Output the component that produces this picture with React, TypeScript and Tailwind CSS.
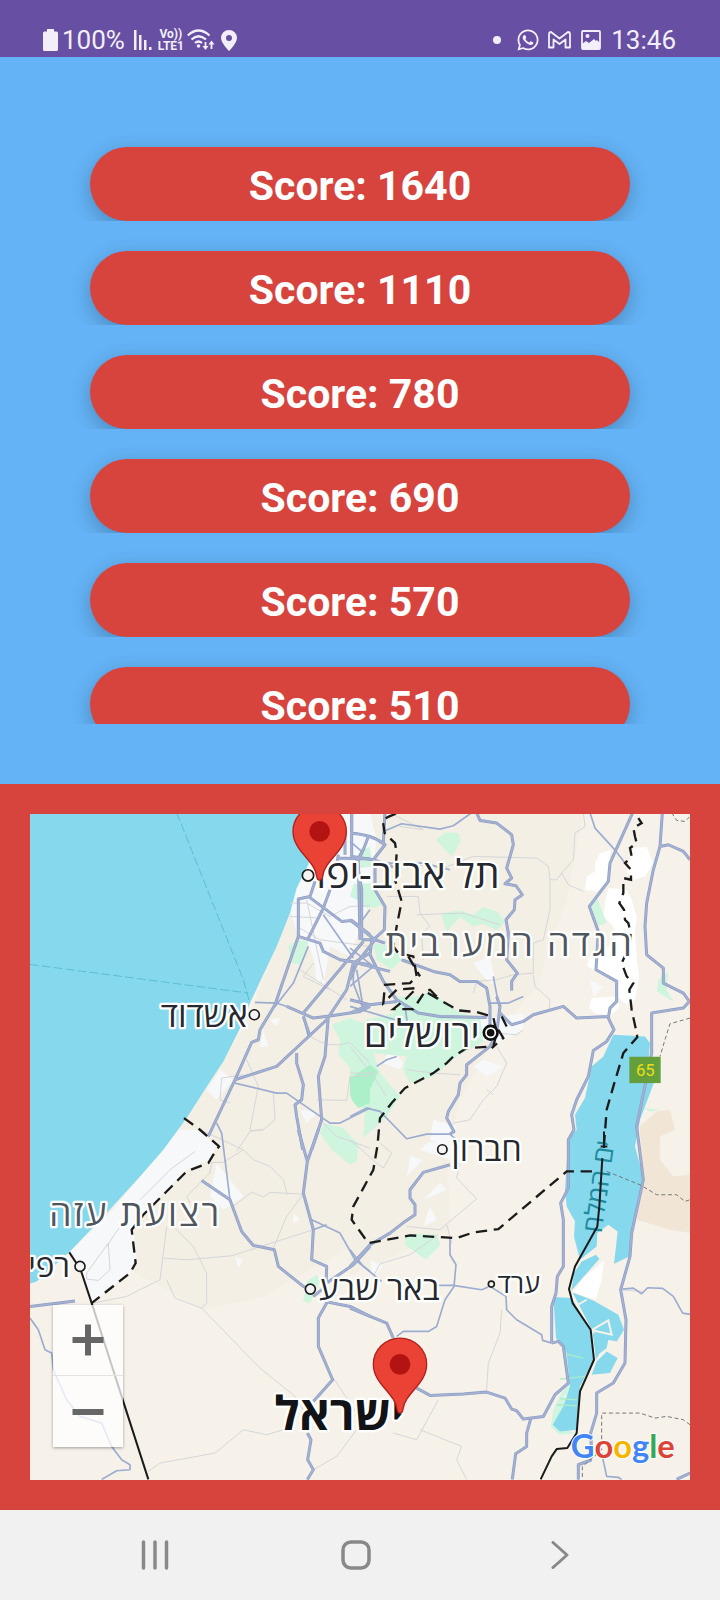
import React from "react";
import { FaWhatsapp } from "react-icons/fa";

type Tile = [number, number];
type Shape = { at: Tile; d: string };

// Each map tile is drawn in its own coordinates and placed by its offset.
const NW: Tile = [0, 0];
const NE: Tile = [960, 0];
const SW: Tile = [0, 990];
const SE: Tile = [960, 990];

const scores = [1640, 1110, 780, 690, 570, 510];

const shade: Shape[] = [
  { at: NE, d: "M0 39H700L650 300 560 560 440 700 330 900 300 1040 0 1040Z" },
  { at: NW, d: "M840 39H1000V1050H400L640 690 780 340Z" },
  { at: SW, d: "M440 0H1000V330L700 500 520 540 300 420 185 520 120 365Z" },
  { at: SE, d: "M0 0H290L300 300 40 420 0 440Z" },
];

const cities: Shape[] = [
  { at: NW, d: "M850 39H1020V180L1000 250 1010 330 960 470 900 440 880 560 830 420 800 400 780 330Z" },
  { at: NW, d: "M570 810L610 840 560 900 530 870ZM700 690L715 740 690 742ZM850 440L885 530 860 550ZM720 660L750 655 740 680ZM810 930L860 940 830 970Z" },
  { at: NE, d: "M0 39H60L80 120 60 260 20 340 0 330ZM370 490L420 470 440 560 400 530ZM390 660L520 640 520 690 440 730 390 720ZM400 780L460 800 410 830 370 800ZM120 740L160 790 150 810 100 790ZM720 540L760 560 730 590ZM250 960L320 980 300 1040 240 1020Z" },
  { at: SW, d: "M440 0H500L560 45 540 90 470 120 350 240 310 290 320 390 300 430 185 520 150 420 120 365 230 260 330 140ZM560 100L640 200 580 240 540 200ZM615 380L640 390 625 415ZM790 250L810 270 790 280Z" },
  { at: SE, d: "M210 60L300 90 320 30 230 40ZM180 80L220 90 170 140ZM270 160L290 180 220 210ZM240 230L260 270 220 290ZM60 390L100 410 70 440Z" },
];

const white: Shape[] = [
  { at: NE, d: "M750 160L782 150 775 245 740 275 705 270 710 230 735 215 735 190Z" },
  { at: NE, d: "M850 145L890 142 910 190 885 230 850 240 830 215 840 175Z" },
  { at: NE, d: "M775 265L830 270 845 300 860 350 855 400 860 480 868 530 855 600 830 615 800 590 805 550 745 515 712 500 715 475 755 450 800 430 790 380 760 350 765 310Z" },
  { at: NE, d: "M725 595L795 590 810 620 780 650 735 640 718 625Z" },
  { at: SE, d: "M762 392L755 450 737 510 668 488 700 445Z" },
];

const green: Shape[] = [
  { at: NE, d: "M258 120L285 98 325 100 332 125 305 170 280 145Z" },
  { at: NE, d: "M272 340L330 332 370 345 400 322 440 335 465 365 440 392 400 372 370 380 330 352 290 395Z" },
  { at: NE, d: "M30 145L60 150 70 200 30 205ZM10 255L60 250 100 315 70 325 0 290ZM70 430L130 440 155 480 125 510 80 480ZM300 430L320 430 305 460Z" },
  { at: NE, d: "M140 590L200 590 240 575 330 640 390 655 400 725 320 770 250 830 180 850 160 810 170 770 70 760 90 820 150 890 110 950 40 1015 45 930 0 890 0 700 50 660 130 640Z" },
  { at: NE, d: "M738 285L770 370 745 378 722 320ZM925 540L955 515 950 570 970 605 920 575ZM880 925L930 930 900 935Z" },
  { at: NW, d: "M775 440L800 420 835 425 815 495 785 490ZM905 675L960 655 1020 680 1020 820 970 815 925 765 930 720ZM985 160L1020 140V200L990 190ZM970 250L1020 270V325L990 320Z" },
  { at: NW, d: "M880 970L940 985 985 1040 980 1080 960 1095 905 1050 870 1000Z" },
  { at: SE, d: "M165 322L180 312 260 314 272 345 228 390 165 345ZM0 20L25 40 20 95 0 105Z" },
  { at: SE, d: "M640 670L665 690 670 745 705 740 690 770 640 800 690 830 630 850 615 890 680 910 630 915 602 890 610 840 635 790 655 760Z" },
  { at: SW, d: "M830 455L860 435 870 455 840 520 820 515Z" },
];

const deepGreen: Shape[] = [
  { at: NE, d: "M0 835L60 795 85 815 50 890 30 925 0 885Z" },
  { at: NW, d: "M960 860L1020 815V910L985 925 965 900Z" },
];

const sand: Shape[] = [
  { at: SE, d: "M868 -10L920 -55 960 -60 975 0 930 20 930 90 970 140 1020 135V310L960 300 860 270 880 150Z" },
];

const lake: Shape[] = [
  { at: NE, d: "M790 705L885 710 900 730 895 790 930 800 870 960 855 1040 882 1140 850 1280 838 1370 792 1392 803 1295 775 1275 742 1300 740 1340 690 1380 672 1310 675 1265 650 1220 645 1170 655 1020 680 990 675 945 705 895 725 800 760 770Z" },
  { at: SE, d: "M738 375L748 388 664 482 672 430 695 395Z" },
  { at: SE, d: "M610 502L665 505 720 600 730 690 690 770 680 900 630 905 608 885 640 830 660 770 650 670 618 625Z" },
  { at: SE, d: "M668 488L730 512 805 555 822 600 800 635 750 625 725 600ZM728 608L775 630 770 655 748 672 738 690ZM770 665L803 685 780 730 725 735 740 695Z" },
];

const minor: Shape[] = [
  { at: NW, d: "M780 310L830 310 900 350 960 320 1020 318M780 350L870 355M800 380L870 420 1020 440M830 300L880 540M810 510L950 600M850 490L820 530 900 570M840 710Q900 750 960 728L1020 790M570 900L575 835 640 825M570 900L600 910M650 780L685 860 660 990M730 880L735 960 700 990 660 993M860 900L950 902 960 830 1020 828M880 970L920 1010 1020 1045" },
  { at: NE, d: "M150 190L280 205 370 170 560 175 595 200 600 240 600 330 580 420 550 430 550 520 490 525 440 540M150 80L220 90 140 50M110 290L205 290 210 340 240 380 215 400 220 480M200 345L340 340 450 375M700 39L705 80 675 100 670 180 635 220 655 255 700 275M600 240L620 240 635 220M370 580L380 545 440 540M550 525L555 560 600 600 598 630M520 690L500 705 440 700M440 740L470 790 440 860 400 900 360 960 310 970M170 810L250 820 330 825M0 820H80M410 870L430 885M0 740L70 830 110 890" },
  { at: SW, d: "M510 0L640 60 670 90 720 110 760 150 772 195M620 65L660 5 700 0M640 60L580 98 545 98 540 130 470 200 480 220M610 230L665 187 700 202 720 188 820 193 770 260 730 355M400 385L470 390 605 378 740 335 850 300M410 290L390 450 290 500 190 520M410 450L435 505 515 535 530 520 530 430 490 350 430 290M515 535L690 715 795 800 820 840M355 1025L390 1000 555 970 640 900 710 915 760 900M850 1020L920 980 980 900M910 745L980 850" },
  { at: SE, d: "M0 30L80 100 100 115 125 70 90 40M380 207L320 145 330 100M380 207L270 300 170 290M290 285L305 340M265 315L180 375 90 402 70 440M455 540L450 610 415 700 410 780M265 810L200 930 130 910M210 900L260 920 335 950 320 990 350 1049M810 480L880 485" },
  { at: SW, d: "M170 430L235 340 240 420 205 452 170 448ZM230 350L270 290M330 210L420 120 495 65" },
];

const medium: Shape[] = [
  { at: NW, d: "M880 345L970 475M675 608L740 610 770 620M835 440L790 550 735 620M970 490V550L1000 630M820 650L835 710M615 850L740 880 770 880 900 970 930 970 1020 925" },
  { at: NE, d: "M100 95L155 72 270 88 310 78 365 39M0 125L35 155 20 180M90 190H220L300 210M30 370L60 330M0 620L135 660M0 445L70 500 0 560M20 510L40 625M420 610H475L520 590M430 530L445 610M0 950L50 925 90 935 170 1017 230 1003 300 1003 325 1025M140 770L110 780 80 800M720 39L735 85 790 145 825 190M165 620L175 690" },
  { at: SW, d: "M0 565L25 600 45 660 65 670 70 720 110 810 150 860 215 880 245 950 275 990 300 1005V1020L260 1023 215 1049M845 270L930 310 975 390 1020 425M850 300L890 285M560 -20L575 10 585 90 600 210" },
  { at: SE, d: "M0 360L40 410 95 455M260 467H310L395 480 415 472M300 325V375L318 405 312 470 285 510 260 590 235 605H160L140 620M420 470L468 500 470 540 500 570 575 615 578 632 605 640M818 478L850 475 875 492 893 474 938 476 970 500 998 550 1020 554M755 970L770 1040 805 1043 815 1049" },
];

const major: Shape[] = [
  { at: NW, d: "M855 245L840 290 805 298V410L735 615 690 690 685 720 665 728 615 840 535 1010M835 290L935 365 965 362 1020 405M805 410L870 430 880 455 930 480 1020 495M900 270L880 325 835 415M770 620L850 655 905 648 990 635 1020 620M1000 425L820 640M820 650L840 710M1020 460L970 490 950 570 890 660 740 800 615 840M895 650L885 770 865 830 875 960 845 1050M800 760V790L820 855 815 900 795 915 800 950 818 1050M965 39V95M925 165L920 200M920 175L1020 178M985 180L990 420M945 95V165M1015 110L1000 150 985 180" },
  { at: NE, d: "M5 39V170L70 180 140 205M0 100Q70 105 105 135L70 180 100 190M105 39L100 130M20 180L35 270V420M75 200V270L105 320 103 390 65 425 60 465 100 545 140 600 205 640 270 650 410 653M0 360L75 420 105 430M35 420H75M75 420L20 490M0 540L25 480M0 485L120 515M0 640L60 615 140 605M155 480L250 515 300 525 330 545 380 545 410 565 420 620 420 720M0 600L60 615" },
  { at: NE, d: "M380 39L390 62 440 70 485 105 490 135 470 205 485 235 465 252 498 258 517 285 495 300 493 330 468 360 475 400 470 480 502 520 485 545V572M440 590L450 620 440 700 420 740 350 795V825L330 850 325 885 295 935 290 955 312 995 300 1003M450 640L485 675 520 665 550 645 640 620 680 655 775 650M848 39L780 190 775 245 718 320 745 395 738 510 800 545V605L780 625 775 655 792 690 770 725 730 752 715 830 680 900 665 945 672 990 655 1020V1165L632 1210 640 1260V1400L622 1430 618 1480 605 1520V1630M937 39L930 140 910 210 890 310 885 380 890 465 940 505V550L1000 580 1018 605 1000 625 905 640V760L860 980 880 1140 845 1300 840 1370 812 1470 828 1560 825 1690 790 1750 740 1780V1840L722 1900 725 1960M930 140L955 135 1000 155 1020 180" },
  { at: SW, d: "M0 530L135 514M515 152L600 210 635 305 670 347 733 360 745 410 820 470 845 480M805 0L832 95 820 190 850 300 845 390 890 410 888 470 850 500M865 0L832 95M1020 350L970 405 890 460M890 520L865 565V650L908 750 850 815M885 515L960 530 1020 560M832 910L843 930 833 990 850 1020 832 1049" },
  { at: SE, d: "M300 105L220 128 180 180V205L195 225V255L165 275 120 310 60 345 0 410M0 535L110 580 130 625M200 775L240 797 340 793 410 787 465 805 485 838 500 843 520 868 580 860 615 795 655 760 640 650 625 635 605 640M542 868L530 910 530 950 497 972 487 1049M725 990L685 1005V1049M980 1049L1020 1030" },
];

const borders: Shape[] = [
  { at: NW, d: "M462 955L510 990 567 1040 550 1065 535 1090 470 1115 340 1245 305 1290 317 1390 300 1420 185 1510" },
  { at: NE, d: "M138 42L118 50 98 60 104 100 135 130 140 160 135 240 155 305 140 380 130 440 145 460 190 470 200 530 180 550 105 555 100 610 140 570 200 565 165 600 130 628H190L225 575 270 600 240 570 225 575 L325 632 380 637 430 652 440 700 430 740 350 745 310 770 290 790 250 820 165 865 125 910 90 955 82 1040 70 1110 40 1165 10 1220 5 1260 55 1330 180 1307 320 1315 370 1298 445 1288 650 1115H735" },
  { at: NE, d: "M175 470L210 530M455 650L470 680M445 690L460 715 425 745" },
  { at: NE, d: "M865 55L875 70 850 85 855 110 860 130 840 145 845 170 825 190 843 210 843 240 820 235 820 280 808 310 822 330 825 360 835 370 842 400 838 440 815 490 830 530 850 550 838 570 845 630 858 690 862 712 820 760 790 860 770 930 762 1035" },
];

const solidBorders: Shape[] = [
  { at: SE, d: "M762 5V55M752 50H772M757 85L748 230 742 290 675 410 657 478 668 520 722 600 732 690 690 785 680 910 652 955 620 958 605 980 572 1049" },
  { at: SW, d: "M118 368L152 420 185 520 355 1049" },
];

const faintBorders: Shape[] = [
  { at: NE, d: "M965 39L980 62 1005 65 1020 50M1020 655L960 672 945 720 930 770" },
  { at: SE, d: "M770 125L870 165 920 195 980 195 1005 215 1020 210M1020 885L1000 870 950 860 915 865 870 850H755V960L710 1000 697 1010V1049" },
];

function Shapes({ items }: { items: Shape[] }) {
  return (
    <>
      {items.map((s, i) => (
        <path key={i} d={s.d} transform={`translate(${s.at[0]} ${s.at[1]})`} />
      ))}
    </>
  );
}

function Pin({ x, y }: { x: number; y: number }) {
  return (
    <g transform={`translate(${x} ${y})`}>
      <path
        d="M0 0C-5 0-8-4-9-12-15-60-80-88-80-146A80 79 0 0 1 80-146C80-88 15-60 9-12 8-4 5 0 0 0Z"
        fill="#ea4335"
        stroke="#b3201a"
        strokeWidth="4"
      />
      <circle cy="-146" r="31" fill="#b31412" />
    </g>
  );
}

function Place({ x, y, size, color = "#25282e", weight = 500, anchor = "middle", spaced = false, children }: {
  x: number;
  y: number;
  size: number;
  color?: string;
  weight?: number;
  anchor?: "start" | "middle" | "end";
  spaced?: boolean;
  children: string;
}) {
  return (
    <text
      x={x}
      y={y}
      fontSize={size}
      fill={color}
      fontWeight={weight}
      textAnchor={anchor}
      stroke="#ffffff"
      strokeWidth="14"
      strokeLinejoin="round"
      paintOrder="stroke"
      className={spaced ? "tracking-[7px]" : ""}
    >
      {children}
    </text>
  );
}

function MapDrawing() {
  return (
    <svg
      viewBox="0 42 1980 2001"
      preserveAspectRatio="xMidYMid slice"
      className="block h-full w-full font-['Open_Sans',sans-serif]"
      role="img"
      aria-label="Map"
    >
      <rect y="39" width="1980" height="2010" fill="#f6f2ea" />
      <g fill="#f3efe4"><Shapes items={shade} /></g>
      <g fill="#f1e6d6"><Shapes items={sand} /></g>
      <g fill="#f7f8fa"><Shapes items={cities} /></g>
      <g fill="#ffffff"><Shapes items={white} /></g>
      <g fill="#cff5df"><Shapes items={green} /></g>
      <g fill="#abf0c8"><Shapes items={deepGreen} /></g>
      <path
        d="M0 39H870L835 195 800 265 780 340 740 440 690 545 660 610 628 690 580 785 540 845 470 955 400 1050 330 1130 230 1240 120 1355 20 1445 0 1452Z"
        fill="#86d8ec"
      />
      <g fill="#86d8ec"><Shapes items={lake} /></g>
      <g stroke="#f6f2ea" strokeWidth="6" fill="none">
        <path d="M1635 1520L1670 1500M1680 1594L1735 1562 1745 1605 1690 1592" />
      </g>
      <g stroke="#a9eccb" strokeWidth="4" fill="none">
        <path d="M1605 1662L1660 1675M1590 1738L1665 1730M1590 1797L1640 1800M1580 1815L1640 1818" />
      </g>
      <g fill="none" stroke="#5cbdd4" strokeWidth="3" strokeDasharray="26 10">
        <path d="M440 39L640 540 658 605M0 494L655 580" />
      </g>
      <g fill="none" stroke="#d6d6d9" strokeWidth="3" strokeLinejoin="round"><Shapes items={minor} /></g>
      <g fill="none" stroke="#9cacd0" strokeWidth="5" strokeLinejoin="round"><Shapes items={medium} /></g>
      <g fill="none" stroke="#8d9dc5" strokeWidth="9" strokeLinejoin="round"><Shapes items={major} /></g>
      <g fill="none" stroke="#a4b1d1" strokeWidth="5" strokeLinejoin="round"><Shapes items={major} /></g>
      <g fill="none" stroke="#77777a" strokeWidth="3" strokeDasharray="12 8"><Shapes items={faintBorders} /></g>
      <g fill="none" stroke="#1b1b1b" strokeWidth="7" strokeDasharray="34 20"><Shapes items={borders} /></g>

      <text transform="translate(1734 1164) rotate(-82)" fontSize="80" fill="#1f8a9c" textAnchor="middle">ים המלח</text>
      <g fill="none" stroke="#1b1b1b" strokeWidth="6" strokeLinejoin="round"><Shapes items={solidBorders} /></g>

      <Place x={1134} y={266} size={118}>תל אביב-יפו</Place>
      <Place x={1438} y={468} size={108} color="#50565e" weight={400} spaced>הגדה המערבית</Place>
      <Place x={523} y={681} size={102}>אשדוד</Place>
      <Place x={1175} y={741} size={114}>ירושלים</Place>
      <Place x={1370} y={1083} size={98}>חברון</Place>
      <Place x={316} y={1280} size={106} color="#50565e" weight={400} spaced>רצועת עזה</Place>
      <Place x={120} y={1431} size={94} anchor="end">רפי</Place>
      <Place x={1048} y={1500} size={98}>באר שבע</Place>
      <Place x={1466} y={1480} size={80}>ערד</Place>
      <Place x={928} y={1892} size={140} color="#111316" weight={700}>ישראל</Place>

      <g fill="#f4f4f2" stroke="#1c1c1c" strokeWidth="5">
        <circle cx="834" cy="227" r="17" />
        <circle cx="673" cy="645" r="15" />
        <circle cx="1237" cy="1049" r="14" />
        <circle cx="150" cy="1400" r="15" />
        <circle cx="841" cy="1468" r="15" />
        <circle cx="1384" cy="1453" r="9" />
        <circle cx="1382" cy="699" r="22" fill="#111" stroke="#111" />
        <circle cx="1382" cy="699" r="14" fill="#111" stroke="#fff" />
      </g>

      <rect x="1798" y="771" width="94" height="79" fill="#659f3c" />
      <text x="1846" y="828" fontSize="50" fill="#eadf17" textAnchor="middle" className="font-['Roboto',sans-serif]">65</text>

      <Pin x={869} y={241} />
      <Pin x={1110} y={1840} />

      <text x="1622" y="1976" fontSize="98" fontWeight="700" stroke="#ffffff" strokeWidth="6" paintOrder="stroke" className="font-['Lato',sans-serif]">
        <tspan fill="#4285f4">G</tspan>
        <tspan fill="#db4437">o</tspan>
        <tspan fill="#f4b400">o</tspan>
        <tspan fill="#4285f4">g</tspan>
        <tspan fill="#34a853">l</tspan>
        <tspan fill="#db4437">e</tspan>
      </text>
    </svg>
  );
}

function StatusBar() {
  return (
    <header className="flex h-[57px] shrink-0 items-end justify-between bg-[#674fa3] pr-11 pb-[3px] pl-[43px] font-['Roboto',sans-serif] text-[26px] leading-7 text-[#f3effa]">
      <div className="flex items-center">
        <svg viewBox="0 0 15 22" className="mr-1 h-[22px] w-[15px]" fill="currentColor" aria-hidden="true">
          <path d="M4 0h7v2.500h2.500A1.500 1.500 0 0 1 15 4v16.500a1.500 1.500 0 0 1-1.500 1.500h-12A1.500 1.500 0 0 1 0 20.500V4a1.500 1.500 0 0 1 1.500-1.500H4z" />
        </svg>
        <span>100%</span>
        <svg viewBox="0 0 20 22" className="ml-2 h-[22px] w-5" fill="currentColor" aria-hidden="true">
          <rect x="1" y="1" width="2.500" height="20" />
          <rect x="6" y="6" width="2.500" height="15" />
          <rect x="11" y="11" width="2.500" height="10" />
          <rect x="16" y="18" width="2.500" height="3" />
        </svg>
        <div className="ml-1 flex w-7 flex-col items-center text-xs leading-3 font-bold">
          <span>Vo))</span>
          <span>LTE1</span>
        </div>
        <svg viewBox="0 0 28 22" className="ml-0.5 h-[22px] w-7" fill="none" stroke="currentColor" strokeWidth="2.200" aria-hidden="true">
          <path d="M.800 6.500Q11.500-3.500 22.500 6.500M4.500 10.500Q11.500 4 19 10.500M8 14Q11.500 11 15 14" />
          <circle cx="11.500" cy="17" r="1.800" fill="currentColor" stroke="none" />
          <path d="M18.500 13v6M24.500 14v6" strokeWidth="1.800" />
          <path d="M15.500 17h6l-3 4zM21.500 15.500h6l-3-4z" fill="currentColor" stroke="none" />
        </svg>
        <svg viewBox="0 0 16 21" className="ml-1.5 h-[21px] w-4" fill="currentColor" fillRule="evenodd" aria-hidden="true">
          <path d="M8 0a8 8 0 0 1 8 8c0 5-8 13-8 13S0 13 0 8a8 8 0 0 1 8-8zm0 5a3 3 0 1 0 0 6 3 3 0 0 0 0-6z" />
        </svg>
      </div>
      <div className="flex items-center">
        <span className="mr-[15px] size-2 rounded-full bg-current" />
        <FaWhatsapp className="mr-2 size-6" aria-hidden="true" />
        <svg viewBox="0 0 23 18" className="mr-[10px] h-[18px] w-[23px]" fill="none" stroke="currentColor" strokeWidth="1.800" strokeLinejoin="round" aria-hidden="true">
          <path d="M1 16.500V3.500Q1 1 3 1L11.500 7.500 20 1Q22 1 22 3.500V16.500H17.500V8.500L11.500 13 5.500 8.500V16.500Z" />
        </svg>
        <svg viewBox="0 0 20 20" className="mr-[10px] size-5" aria-hidden="true">
          <rect x="1" y="1" width="18" height="18" rx="1" fill="none" stroke="currentColor" strokeWidth="1.800" />
          <circle cx="6.500" cy="6" r="2" fill="currentColor" />
          <path d="M1 14l4-3 3 2 5-4 2 2 1-1 3 3v6H1z" fill="currentColor" />
        </svg>
        <time>13:46</time>
      </div>
    </header>
  );
}

export default function App() {
  return (
    <div className="flex h-screen flex-col font-['Roboto',sans-serif]">
      <StatusBar />
      <main className="grid min-h-0 flex-1 grid-rows-2">
        <section aria-label="High scores" className="min-h-0 bg-[#64b3f6] p-[60px]">
          <ul className="h-full overflow-y-auto [scrollbar-width:none]">
            {scores.map((score) => (
              <li key={score} className="overflow-hidden px-[30px] pt-[30px]">
                <button
                  type="button"
                  className="block h-[74px] w-full rounded-full bg-[#d7443e] pt-1 text-[41px] leading-none font-bold text-white shadow-[0_6px_20px_rgba(0,0,0,0.24)]"
                >
                  Score: {score}
                </button>
              </li>
            ))}
          </ul>
        </section>
        <section aria-label="Score locations" className="min-h-0 bg-[#d7443e] p-[30px]">
          <div className="relative h-full overflow-hidden">
            <MapDrawing />
            <div className="absolute bottom-[33px] left-[23px] flex w-[70px] flex-col divide-y divide-[#e2e2e2] bg-white/75 text-[#666666] shadow-[0_1px_3px_rgba(0,0,0,0.35)]">
              <button type="button" aria-label="Zoom in" className="flex h-[71px] items-center justify-center">
                <svg viewBox="0 0 32 32" className="size-8" fill="currentColor" aria-hidden="true">
                  <path d="M13 0.500h6v12.500h12.500v6H19v12.500h-6V19H0.500v-6H13z" />
                </svg>
              </button>
              <button type="button" aria-label="Zoom out" className="flex h-[71px] items-center justify-center">
                <svg viewBox="0 0 32 32" className="size-8" fill="currentColor" aria-hidden="true">
                  <path d="M0.500 13h31v6h-31z" />
                </svg>
              </button>
            </div>
          </div>
        </section>
      </main>
      <nav aria-label="System" className="grid h-[90px] shrink-0 grid-cols-[1fr_auto_1fr] items-center bg-[#f1f1f1] pr-[149px] pl-[141px] text-[#898989]">
        <button type="button" aria-label="Recent apps" className="justify-self-start">
          <svg viewBox="0 0 28 42" className="h-[42px] w-7" stroke="currentColor" strokeWidth="3.500" strokeLinecap="round" aria-hidden="true">
            <path d="M2.500 8v26M14 8v26M25.500 8v26" />
          </svg>
        </button>
        <button type="button" aria-label="Home">
          <svg viewBox="0 0 30 30" className="size-[30px]" fill="none" stroke="currentColor" strokeWidth="3.500" aria-hidden="true">
            <rect x="2" y="2" width="26" height="26" rx="8" />
          </svg>
        </button>
        <button type="button" aria-label="Back" className="justify-self-end">
          <svg viewBox="0 0 20 28" className="h-7 w-5" fill="none" stroke="currentColor" strokeWidth="3" strokeLinecap="round" strokeLinejoin="round" aria-hidden="true">
            <path d="M2 1.500L16 14 2 26.500" />
          </svg>
        </button>
      </nav>
    </div>
  );
}
